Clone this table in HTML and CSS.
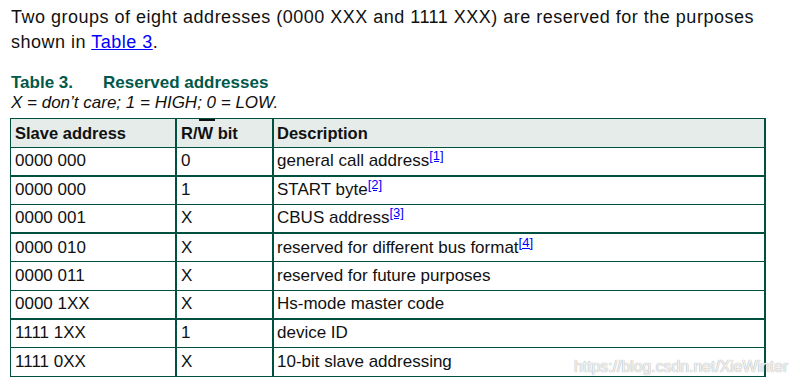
FILE: index.html
```html
<!DOCTYPE html>
<html>
<head>
<meta charset="utf-8">
<link rel="stylesheet" href="styles.css">
</head>
<body>
<div class="page">
  <p class="intro">Two groups of eight addresses (0000 XXX and 1111 XXX) are reserved for the purposes shown in <a class="link" href="#">Table 3</a>.</p>
  <div class="caption"><span class="cap-num">Table 3.</span><span class="cap-title">Reserved addresses</span></div>
  <div class="note">X = don’t care; 1 = HIGH; 0 = LOW.</div>
  <table class="addr">
    <thead>
      <tr><th class="c1">Slave address</th><th class="c2">R/<span class="ovl">W</span> bit</th><th class="c3">Description</th></tr>
    </thead>
    <tbody>
      <tr class="thick"><td class="c1">0000 000</td><td class="c2">0</td><td class="c3">general call address<sup><a class="ref" href="#">[1]</a></sup></td></tr>
      <tr><td class="c1">0000 000</td><td class="c2">1</td><td class="c3">START byte<sup><a class="ref" href="#">[2]</a></sup></td></tr>
      <tr class="thick"><td class="c1">0000 001</td><td class="c2">X</td><td class="c3">CBUS address<sup><a class="ref" href="#">[3]</a></sup></td></tr>
      <tr><td class="c1">0000 010</td><td class="c2">X</td><td class="c3">reserved for different bus format<sup><a class="ref" href="#">[4]</a></sup></td></tr>
      <tr><td class="c1">0000 011</td><td class="c2">X</td><td class="c3">reserved for future purposes</td></tr>
      <tr class="thick"><td class="c1">0000 1XX</td><td class="c2">X</td><td class="c3">Hs-mode master code</td></tr>
      <tr><td class="c1">1111 1XX</td><td class="c2">1</td><td class="c3">device ID</td></tr>
      <tr><td class="c1">1111 0XX</td><td class="c2">X</td><td class="c3">10-bit slave addressing</td></tr>
    </tbody>
  </table>
  <div class="watermark">https://blog.csdn.net/XieWinter</div>
</div>
</body>
</html>
```
FILE: styles.css
```css
html, body {
  margin: 0;
  padding: 0;
  background: #ffffff;
}
.page {
  position: relative;
  width: 800px;
  height: 387px;
  overflow: hidden;
  padding: 5px 0 0 11px;
  box-sizing: border-box;
  font-family: "Liberation Sans", Arial, sans-serif;
  color: #111;
}
.intro {
  margin: 0;
  font-size: 18px;
  line-height: 25px;
  letter-spacing: 0.5px;
  width: 755px;
}
.link {
  color: #0000ff;
  text-decoration: underline;
}
.caption {
  margin-top: 18px;
  font-size: 17px;
  line-height: 20px;
  font-weight: bold;
  color: #00594a;
}
.cap-num {
  display: inline-block;
  width: 92px;
}
.note {
  font-size: 17px;
  line-height: 20px;
  font-style: italic;
  color: #111;
}
.addr {
  margin-top: 5px;
  margin-left: -1px;
  border-collapse: separate;
  border-spacing: 0;
  border-left: 1px solid #00503f;
  border-top: 1px solid #00503f;
  border-right: 2px solid #00503f;
  width: 756px;
  table-layout: fixed;
}
.addr th, .addr td {
  text-align: left;
  padding: 0 0 0 4px;
  height: 28.6px;
  box-sizing: border-box;
  border-bottom: 1px solid #00503f;
  vertical-align: middle;
  white-space: nowrap;
}
.addr th {
  height: 29px;
  background: #e5ecea;
  font-size: 16.5px;
  font-weight: bold;
  color: #111;
}
.addr td {
  font-size: 17px;
  color: #111;
}
.addr tr.thick td {
  border-bottom-width: 2px;
}
.addr .c1 {
  width: 166px;
  border-right: 2px solid #00503f;
}
.addr .c2 {
  width: 97px;
  border-right: 2px solid #00503f;
}
.addr .c3 {
  padding-left: 3px;
}
.ovl {
  position: relative;
}
.ovl::before {
  content: "";
  position: absolute;
  left: 1px;
  right: -2px;
  top: -5px;
  height: 2px;
  background: #111;
}
sup {
  font-size: 13px;
  line-height: 0;
  vertical-align: 6px;
}
.ref {
  color: #0000ff;
  text-decoration: underline;
}
.watermark {
  position: absolute;
  left: 574px;
  top: 357px;
  font-size: 15.8px;
  line-height: 20px;
  color: rgba(255, 255, 255, 0.85);
  text-shadow: 0 0 1px #aaa, 0 0 1px #bbb;
  white-space: nowrap;
}
```
